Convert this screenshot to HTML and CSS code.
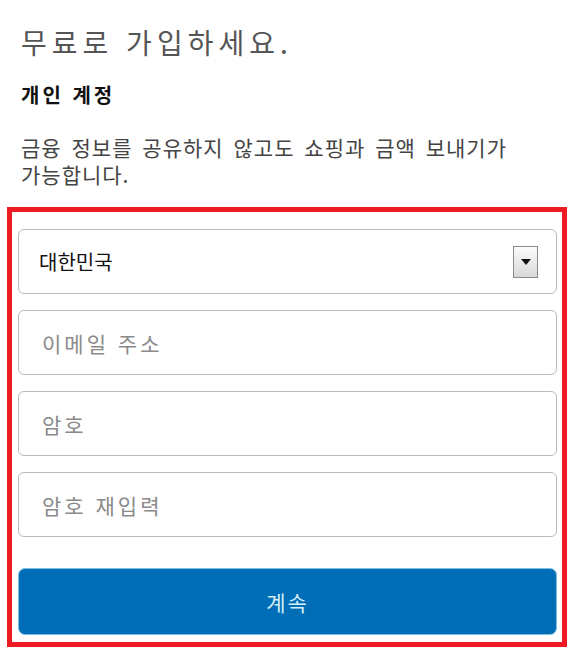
FILE: index.html
```html
<!DOCTYPE html>
<html lang="ko">
<head>
<meta charset="utf-8">
<title>가입</title>
<link rel="stylesheet" href="styles.css">
</head>
<body>
<div class="page">
  <div class="intro">
    <h1 class="title">무료로 가입하세요.</h1>
    <h2 class="subtitle">개인 계정</h2>
    <p class="desc">금융 정보를 공유하지 않고도 쇼핑과 금액 보내기가 가능합니다.</p>
  </div>
  <form class="form-box">
    <div class="field select-field">
      <span class="select-value">대한민국</span>
      <span class="select-arrow"><span class="tri"></span></span>
    </div>
    <input class="field" type="email" placeholder="이메일 주소">
    <input class="field" type="password" placeholder="암호">
    <input class="field" type="password" placeholder="암호 재입력">
    <button class="submit" type="button">계속</button>
  </form>
</div>
</body>
</html>
```

FILE: styles.css
```css
* { box-sizing: border-box; }
html, body { margin: 0; padding: 0; background: #fff; }
body {
  font-family: "Noto Sans CJK KR", "Noto Sans", sans-serif;
  width: 572px;
  height: 672px;
  overflow: hidden;
}
.page { padding-top: 24px; }
.intro { padding: 0 20px 0 21px; }
.title {
  margin: 0;
  font-size: 28px;
  line-height: 36px;
  font-weight: 400;
  color: #555;
  letter-spacing: 5px;
}
.subtitle {
  margin: 21px 0 0;
  font-size: 20px;
  line-height: 28px;
  font-weight: 700;
  color: #111;
  letter-spacing: 3px;
}
.desc {
  margin: 25px 0 0;
  font-size: 21px;
  line-height: 27px;
  color: #444;
  letter-spacing: 1px;
  word-spacing: 3px;
  word-break: keep-all;
}
.form-box {
  margin: 19px 5px 0 7px;
  border: 5px solid #ed1c24;
  padding: 17px 5px 7px 6px;
  display: flex;
  flex-direction: column;
}
.field {
  display: block;
  width: 100%;
  height: 65px;
  margin: 0 0 16px;
  border: 1px solid #bbb;
  border-radius: 6px;
  background: #fff;
  padding: 0 0 0 23px;
  font-family: "Noto Sans CJK KR", "Noto Sans", sans-serif;
  font-size: 21px;
  letter-spacing: 3px;
  color: #222;
  outline: none;
}
.field::placeholder { color: #8a8a8a; }
.select-field {
  display: flex;
  align-items: center;
  justify-content: space-between;
  padding: 0 18px 0 20px;
}
.select-value {
  color: #111;
  font-size: 20px;
  letter-spacing: 0;
}
.select-arrow {
  width: 25px;
  height: 32px;
  border: 1px solid #8a8a8a;
  background: linear-gradient(#fbfbfb, #d8d8d8);
  display: flex;
  align-items: center;
  justify-content: center;
}
.tri {
  width: 0;
  height: 0;
  border-left: 5px solid transparent;
  border-right: 5px solid transparent;
  border-top: 6px solid #111;
}
.submit {
  margin-top: 15px;
  height: 67px;
  width: 100%;
  border: 1px solid #7fc1e0;
  border-radius: 7px;
  background: #006db7;
  color: #d6eef5;
  font-family: "Noto Sans CJK KR", "Noto Sans", sans-serif;
  font-size: 21px;
  letter-spacing: 2px;
}
```
